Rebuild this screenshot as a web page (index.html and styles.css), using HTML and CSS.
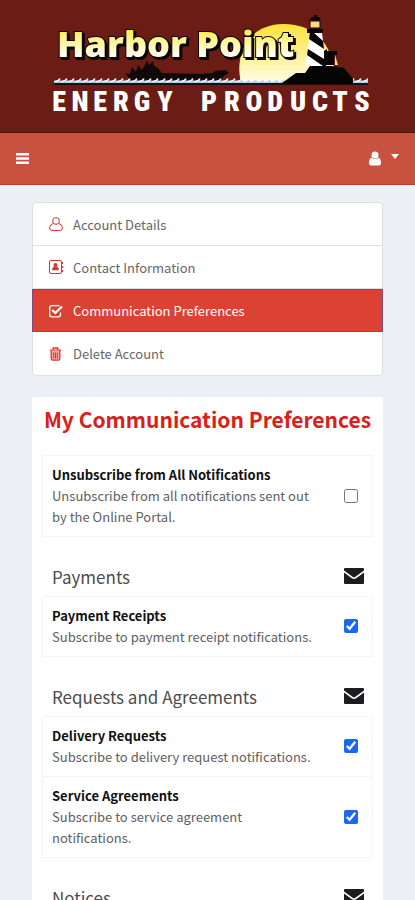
FILE: index.html
```html
<!DOCTYPE html>
<html lang="en">
<head>
    <meta charset="UTF-8">
    <meta name="viewport" content="width=device-width, initial-scale=1.0">
    <title>My Communication Preferences</title>
    <link rel="stylesheet" href="styles.css">
</head>
<body>
    <!-- shared envelope icon -->
    <svg class="sprite" aria-hidden="true">
        <symbol id="envelope" viewBox="0 0 20 16">
            <path d="M1 0h18a1 1 0 0 1 1 1v1.500l-8.600 6.300q-1.400 1-2.800 0L0 2.500V1a1 1 0 0 1 1-1z"/>
            <path d="M0 4.600l7.800 5.600q2.200 1.500 4.400 0L20 4.600V15a1 1 0 0 1-1 1H1a1 1 0 0 1-1-1z"/>
        </symbol>
    </svg>

    <header class="header">
        <svg class="logo" viewBox="0 0 320 100" role="img" aria-label="Harbor Point Energy Products">
            <defs>
                <linearGradient id="sun" x1="0" y1="0" x2="0" y2="1">
                    <stop offset="0" stop-color="#fde13a"/>
                    <stop offset="0.5" stop-color="#fdf08e"/>
                    <stop offset="1" stop-color="#fffde0"/>
                </linearGradient>
                <linearGradient id="gold" x1="0" y1="0" x2="0" y2="1">
                    <stop offset="0.2" stop-color="#fdec4a"/>
                    <stop offset="0.75" stop-color="#fffef0"/>
                </linearGradient>
                <pattern id="wave" width="7" height="6" patternUnits="userSpaceOnUse" x="6" y="62">
                    <path d="M0 3.500Q4 3.500 6 0.500Q6 2 7 3.500V6H0z" fill="#a9d3e6"/>
                    <path d="M0 3.500Q4 3.500 6 0.500" fill="none" stroke="#fff" stroke-width="1.300"/>
                </pattern>
            </defs>
            <path d="M193 66C187 43 196 9 235 8C269 8 282 30 286 51V66z" fill="url(#sun)"/>
            <!-- ship -->
            <path d="M84 66L77 57L82 58L84 51L88 56L90 49L94 54L97 49L99 44L101 49L105 45L106 50L110 52L114 57L153 58L165 57L167 55L177 54L181 57L176 60L172 65z" fill="#100907"/>
            <rect x="6" y="62" width="314" height="6" fill="url(#wave)"/>
            <rect x="6" y="67" width="314" height="2" fill="#210d0a"/>
            <!-- rock and lighthouse -->
            <path d="M234 67L248 57L257 57L262 50H284L296 52L305 63V68H231z" fill="#050505"/>
            <path d="M262 17H274L278 50H257z" fill="#fff"/>
            <path d="M262 16L265 16L275 25L276 33L261 23zM260 33L276 43L278 50H275L259 39z" fill="#050505"/>
            <path d="M276 35L279 33V35H289V39H286V49H276zM259 13H275V17H259zM261 4H273L271 1H269V-1H266V1H264z" fill="#050505"/>
            <path d="M262 5H272V12H262z" fill="#f8df82" stroke="#050505" stroke-width="1"/>
            <path d="M287 39l3 10h-3z" fill="#f8df82"/>
            <text class="logo-name" x="9" y="41">Harbor Point</text>
            <text class="logo-sub" y="95" x="11 32 52 73 94 117 161 184 206 227 250 272 292 314">ENERGYPRODUCTS</text>
        </svg>
    </header>

    <nav class="navbar">
        <button class="nav-btn" aria-label="Menu">
            <svg width="13" height="13" viewBox="0 0 13 13" fill="currentColor">
                <path d="M0 1h13v2.500H0zM0 5.300h13v2.500H0zM0 9.600h13v2.500H0z"/>
            </svg>
        </button>
        <button class="nav-btn" aria-label="Account">
            <svg width="12" height="15" viewBox="0 0 12 15" fill="currentColor">
                <circle cx="6" cy="4" r="3.500"/>
                <path d="M2.500 6.500Q6 9.500 9.500 6.500Q12 7.500 12 12Q12 14.500 9.800 14.500H2.200Q0 14.500 0 12Q0 7.500 2.500 6.500z"/>
            </svg>
            <svg class="caret" width="8" height="5" viewBox="0 0 8 5" fill="currentColor">
                <path d="M0 0h8L4 5z"/>
            </svg>
        </button>
    </nav>

    <main class="content">
        <ul class="menu">
            <li>
                <a class="menu-item" href="#">
                    <svg class="icon" viewBox="0 0 14 14" fill="none" stroke="currentColor">
                        <circle cx="7" cy="4" r="3.400"/>
                        <path d="M4 6.500Q.7 7.400 .6 11Q.6 13.400 3 13.400H11Q13.400 13.400 13.400 11Q13.300 7.400 10 6.500"/>
                    </svg>
                    Account Details
                </a>
            </li>
            <li>
                <a class="menu-item" href="#">
                    <svg class="icon" viewBox="0 0 14 14" fill="currentColor">
                        <rect x="0.500" y="0.500" width="12" height="13" rx="1.500" fill="none" stroke="currentColor"/>
                        <path d="M13 2h1v2h-1zM13 6h1v2h-1zM13 10h1v2h-1z"/>
                        <circle cx="6.500" cy="5" r="2"/>
                        <path d="M4.700 6.500h3.600Q9.900 7.500 9.900 10.300H3.100Q3.100 7.500 4.700 6.500z"/>
                    </svg>
                    Contact Information
                </a>
            </li>
            <li>
                <a class="menu-item active" href="#" aria-current="page">
                    <svg class="icon" viewBox="0 0 14 14" fill="none" stroke="currentColor">
                        <path d="M11.500 8.500V10.500Q11.500 12.800 9.200 12.800H3Q.7 12.800 .7 10.500V4Q.7 1.700 3 1.700H9.200Q10 1.700 10.500 2" stroke-width="1.300"/>
                        <path d="M3.200 6L6.300 9L13 2.500" stroke-width="2.300"/>
                    </svg>
                    Communication Preferences
                </a>
            </li>
            <li>
                <a class="menu-item" href="#">
                    <svg class="icon" viewBox="0 0 14 14" fill="none" stroke="currentColor">
                        <path d="M1 3.200H12M4.200 3V1H8.800V3" stroke-width="1.300"/>
                        <path d="M2.200 3.500V11.700Q2.200 13.200 3.700 13.200H9.300Q10.800 13.200 10.800 11.700V3.500" fill="#f0a8a3" stroke-width="1.300"/>
                        <path d="M4.700 5.500V11.300M6.500 5.500V11.300M8.300 5.500V11.300"/>
                    </svg>
                    Delete Account
                </a>
            </li>
        </ul>

        <section class="card">
            <h1>My Communication Preferences</h1>

            <div class="options">
                <label class="option">
                    <span class="option-text">
                        <strong>Unsubscribe from All Notifications</strong>
                        <span>Unsubscribe from all notifications sent out by the Online Portal.</span>
                    </span>
                    <input type="checkbox">
                </label>
            </div>

            <div class="group-header">
                <h2>Payments</h2>
                <svg class="mail"><use href="#envelope"/></svg>
            </div>
            <div class="options">
                <label class="option">
                    <span class="option-text">
                        <strong>Payment Receipts</strong>
                        <span>Subscribe to payment receipt notifications.</span>
                    </span>
                    <input type="checkbox" checked>
                </label>
            </div>

            <div class="group-header">
                <h2>Requests and Agreements</h2>
                <svg class="mail"><use href="#envelope"/></svg>
            </div>
            <div class="options">
                <label class="option">
                    <span class="option-text">
                        <strong>Delivery Requests</strong>
                        <span>Subscribe to delivery request notifications.</span>
                    </span>
                    <input type="checkbox" checked>
                </label>
                <label class="option">
                    <span class="option-text">
                        <strong>Service Agreements</strong>
                        <span>Subscribe to service agreement notifications.</span>
                    </span>
                    <input type="checkbox" checked>
                </label>
            </div>

            <div class="group-header">
                <h2>Notices</h2>
                <svg class="mail"><use href="#envelope"/></svg>
            </div>
        </section>
    </main>
</body>
</html>
```

FILE: styles.css
```css
* { margin: 0; padding: 0; box-sizing: border-box; }
body {
    font-family: "Noto Sans CJK SC", "Open Sans", sans-serif;
    font-size: 13px;
    line-height: 21px;
    background: #ecf0f4;
    color: #606060;
}
.sprite {
    display: none;
}
.header {
    display: flex;
    justify-content: center;
    padding: 16px;
    background: #6b1c15;
    border-bottom: 1px solid #5c120c;
}
.logo {
    width: 320px;
    height: 100px;
    overflow: visible;
}
.logo-name {
    font-family: "Open Sans", sans-serif;
    font-size: 36px;
    font-weight: 800;
    fill: url(#gold);
    stroke: #0c0705;
    stroke-width: 2px;
    paint-order: stroke;
    filter: drop-shadow(2px 2px 0 #0c0705);
}
.logo-sub {
    font-family: "Roboto Condensed", "Open Sans Condensed", Roboto, sans-serif;
    font-size: 28px;
    font-weight: 900;
    fill: #fff;
    text-anchor: middle;
}
.navbar {
    display: flex;
    justify-content: space-between;
    align-items: center;
    height: 52px;
    padding: 0 16px;
    background: #c9513f;
    border-bottom: 1px solid #b8402c;
}
.nav-btn {
    display: flex;
    align-items: center;
    gap: 10px;
    background: none;
    border: none;
    color: #fff;
    cursor: pointer;
}
.caret {
    margin-bottom: 5px;
}
.content {
    padding: 17px 32px 0;
}
.menu {
    list-style: none;
    margin-bottom: 21px;
    background: #fff;
    border: 1px solid #dde0e2;
    border-radius: 4px;
}
.menu-item {
    display: flex;
    align-items: center;
    gap: 10px;
    height: 43px;
    padding: 0 16px;
    border-bottom: 1px solid #dde0e2;
    color: #666;
    text-decoration: none;
}
.menu li:last-child .menu-item {
    border-bottom: none;
}
.icon {
    width: 14px;
    height: 14px;
    color: #dc3535;
}
.menu li .menu-item.active {
    margin: 0 -1px;
    background: #db4234;
    border: 1px solid #7d4a80;
    color: #fff;
}
.active .icon {
    color: #fff;
}
.card {
    padding: 8px 10px 0;
    background: #fff;
    border-radius: 3px;
}
.card h1 {
    margin-bottom: 22px;
    font-size: 21px;
    line-height: 28px;
    font-weight: 700;
    text-align: center;
    white-space: nowrap;
    color: #d9201a;
}
.options {
    border: 1px solid #f3f4f5;
}
.option {
    display: flex;
    align-items: center;
    justify-content: space-between;
    padding: 8px 14px 9px 9px;
}
.option + .option {
    border-top: 1px solid #f3f4f5;
}
.option-text {
    max-width: 270px;
}
.option-text strong {
    display: block;
    color: #111;
}
.option input {
    width: 14px;
    height: 14px;
    accent-color: #1b66f2;
}
.group-header {
    display: flex;
    align-items: center;
    justify-content: space-between;
    height: 40px;
    margin-top: 19px;
    padding: 0 9px 0 10px;
}
.group-header h2 {
    font-size: 17px;
    font-weight: 400;
    color: #4c4c4c;
}
.mail {
    width: 20px;
    height: 16px;
    fill: #1d1d1f;
}
```
